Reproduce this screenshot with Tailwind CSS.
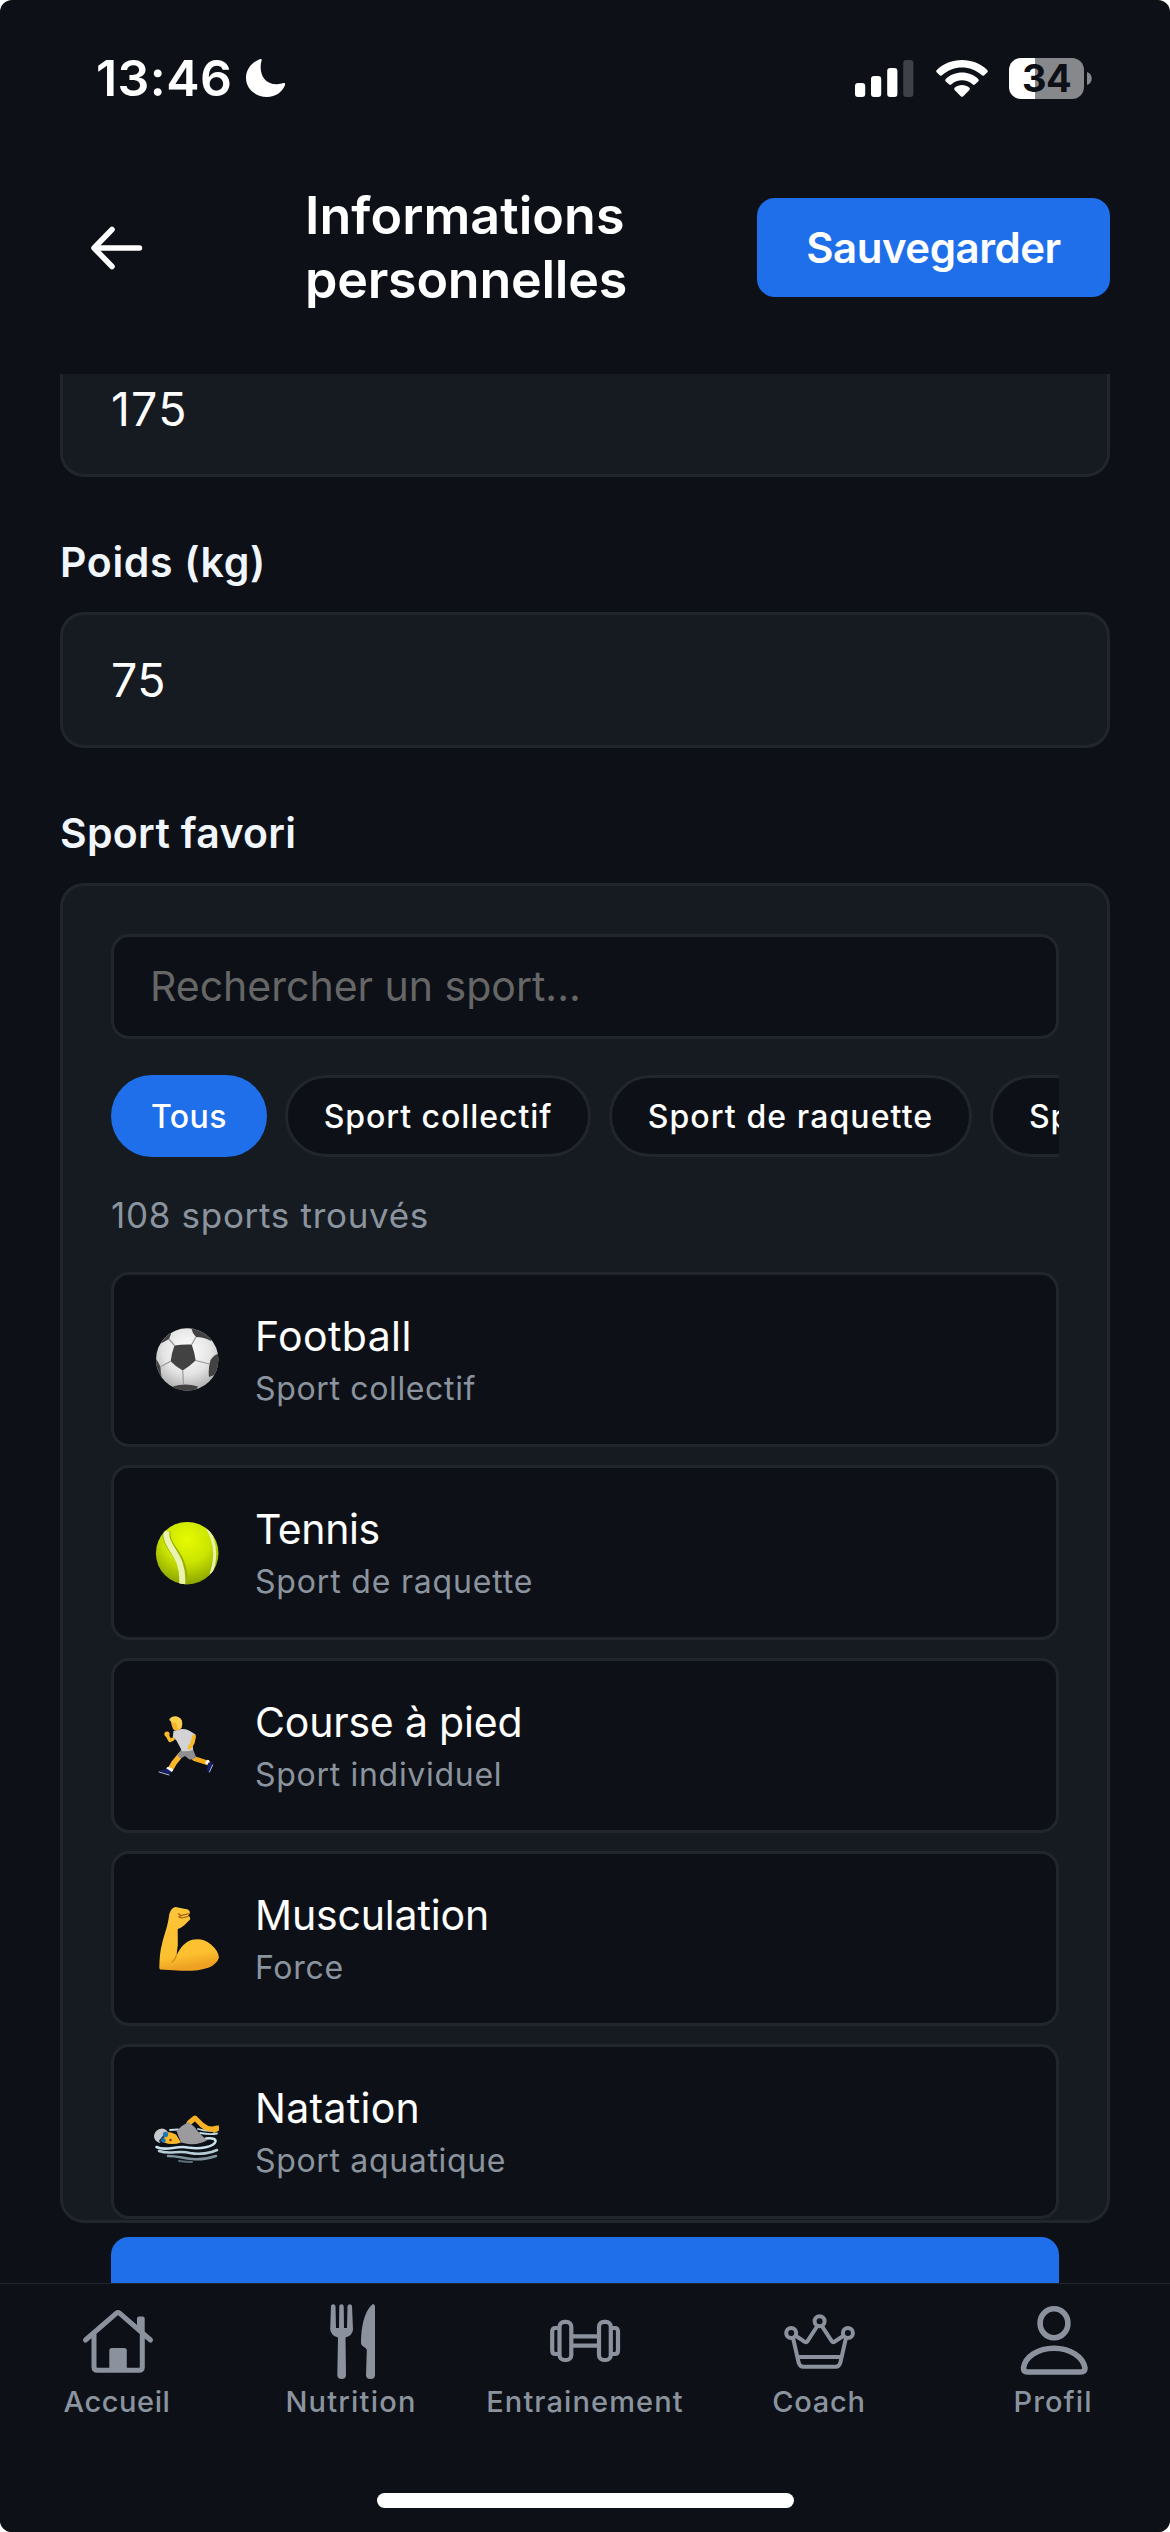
<!DOCTYPE html>
<html lang="fr">
<head>
<meta charset="utf-8">
<title>Informations personnelles</title>
<script src="https://cdn.jsdelivr.net/npm/@tailwindcss/browser@4"></script>
</head>
<body class="bg-white font-['Inter',sans-serif] text-white antialiased">
<div class="flex h-[2532px] w-[1170px] flex-col overflow-hidden rounded-[12px] bg-[#0d1117]">

  <!-- Status bar -->
  <div class="flex h-[156px] shrink-0 items-center justify-between pr-[78px] pl-[96px]">
    <div class="flex items-center">
      <span class="w-[150px] text-[50px] leading-[52px] font-semibold tracking-[0.45px]">13:46</span>
      <svg class="h-[40px] w-[40px]" viewBox="0 0 40 40" fill="#fff"><path d="M13.6 1.2C14.8.6 16 1 15.6 2.4C12.6 13 16.5 26.3 31 26.2C33.500 26.200 35.500 25.700 37.200 25.100C38.800 24.600 39.500 25.500 39 27C36.500 34 29.500 39 21 39C9.500 39 0 30.500 0 20C0 11.500 5.500 4.500 13.600 1.200Z"/></svg>
    </div>
    <div class="flex items-center">
      <svg class="mr-[22px] h-[41px] w-[59px]" viewBox="0 0 59 41" fill="#fff"><rect x="0" y="25" width="10.200" height="14" rx="3"/><rect x="16" y="18" width="10.200" height="21" rx="3"/><rect x="32.200" y="10" width="10.200" height="29" rx="3"/><rect x="48.200" y="2" width="10.200" height="37" rx="3" fill="#3e4147"/></svg>
      <svg class="mr-[21px] h-[41px] w-[52px]" viewBox="0 0 52 41" fill="#fff"><path d="M.6 12.200C14 -1.400 38 -1.400 51.400 12.200Q52.200 13.200 51.400 14.200L48 17.400Q47 18.200 46 17.300C34.500 6.900 17.500 6.900 6 17.300Q5 18.200 4 17.400L.6 14.200Q-.2 13.200 .6 12.200Z"/><path d="M9.600 21.200C18.500 12.300 33.500 12.300 42.400 21.200Q43.200 22.200 42.400 23.200L38.800 26.500Q37.800 27.300 36.800 26.400C30.500 20.900 21.500 20.900 15.200 26.400Q14.200 27.300 13.200 26.500L9.600 23.200Q8.800 22.200 9.600 21.200Z"/><path d="M18.600 29.800C22.900 26 29.100 26 33.400 29.800Q34.400 30.800 33.400 31.900L27 38.400Q26 39.200 25 38.400L18.600 31.900Q17.600 30.800 18.600 29.800Z"/></svg>
      <div class="flex h-[41px] w-[75px] items-center justify-center rounded-[12px] bg-linear-to-r from-white from-35% to-[#87888b] to-35%">
        <span class="text-[38px] leading-[41px] font-bold tracking-[-0.5px] text-[#0d1117]">34</span>
      </div>
      <svg class="ml-[3px] h-[13px] w-[5px]" viewBox="0 0 5 13" fill="#87888b"><path d="M0 0C6.300 2 6.300 11 0 13Z"/></svg>
    </div>
  </div>

  <!-- Header -->
  <header class="flex h-[183px] shrink-0 items-center pr-[60px] pl-[90px]">
    <svg class="h-[54px] w-[54px]" viewBox="0 0 54 54" fill="none" stroke="#fff" stroke-width="5.500" stroke-linecap="round" stroke-linejoin="round"><path d="M22 8.500L4 27L22 45.500M5 27H49.500"/></svg>
    <h1 class="ml-[161px] w-[452px] text-[52px] leading-[64px] font-semibold"><span class="tracking-[0.08px]">Informations</span><br><span class="tracking-[-0.25px]">personnelles</span></h1>
    <button class="h-[99px] w-[353px] rounded-[18px] bg-[#1f6feb] pb-[1px] text-[42px] leading-[51px] font-semibold tracking-[-0.46px]">Sauvegarder</button>
  </header>

  <!-- Scrolled form -->
  <main class="mt-[35px] flex h-[1909px] shrink-0 flex-col overflow-hidden px-[60px]">
    <div class="-mt-[33px] flex h-[136px] shrink-0 items-center rounded-[24px] border-[3px] border-[#21262d] bg-[#161b22] pt-[2px] pl-[48px] text-[46.5px] tracking-[1.2px]">175</div>

    <label class="mt-[60px] mb-[25px] text-[41px] leading-[50px] font-semibold tracking-[0.65px] text-[#f0f6fc]">Poids (kg)</label>
    <div class="flex h-[136px] shrink-0 items-center rounded-[24px] border-[3px] border-[#21262d] bg-[#161b22] pt-[2px] pl-[48px] text-[46.5px] tracking-[0.4px]">75</div>

    <label class="mt-[60px] mb-[25px] text-[41px] leading-[50px] font-semibold tracking-[0.3px] text-[#f0f6fc]">Sport favori</label>
    <section class="flex h-[1340px] shrink-0 flex-col rounded-[24px] border-[3px] border-[#21262d] bg-[#161b22] px-[48px] pt-[48px]">
      <div class="flex h-[105px] shrink-0 items-center rounded-[18px] border-[3px] border-[#21262d] bg-[#0d1117] pl-[36px] text-[41px] text-[#666666]">Rechercher un sport...</div>

      <div class="mt-[36px] flex h-[82px] shrink-0 gap-[18px] overflow-hidden text-[32px] font-medium whitespace-nowrap">
        <span class="flex w-[156px] shrink-0 items-center justify-center rounded-full bg-[#1f6feb] pt-[2px] tracking-[0.5px]">Tous</span>
        <span class="flex w-[306px] shrink-0 items-center justify-center rounded-full border-[3px] border-[#21262d] bg-[#0d1117] pt-[2px] tracking-[0.95px]">Sport collectif</span>
        <span class="flex w-[363px] shrink-0 items-center justify-center rounded-full border-[3px] border-[#21262d] bg-[#0d1117] pt-[2px] tracking-[1.1px]">Sport de raquette</span>
        <span class="flex w-[325px] shrink-0 items-center rounded-full border-[3px] border-[#21262d] bg-[#0d1117] pt-[2px] pl-[36px] tracking-[0.95px]">Sport individuel</span>
      </div>

      <p class="mt-[37px] mb-[36px] text-[35px] leading-[42px] tracking-[0.7px] text-[#8b949e]">108 sports trouvés</p>

      <ul class="flex flex-col gap-[18px]">
        <li class="flex h-[175px] shrink-0 items-center gap-[35px] rounded-[18px] border-[3px] border-[#21262d] bg-[#0d1117] pl-[40px]">
          <svg class="h-[66px] w-[66px] overflow-visible" viewBox="0 0 66 66">
            <defs>
              <radialGradient id="ball" cx=".5" cy=".35" r=".7"><stop offset="0" stop-color="#fff"/><stop offset=".55" stop-color="#e4e4e4"/><stop offset="1" stop-color="#a4a4a4"/></radialGradient>
              <clipPath id="ballClip"><circle cx="33.200" cy="32.500" r="31.200"/></clipPath>
            </defs>
            <circle cx="33.200" cy="32.500" r="31.200" fill="url(#ball)"/>
            <g clip-path="url(#ballClip)">
              <g fill="#424242"><path d="M20.500 18.500Q29 17 37.700 17.500Q40.500 25 41.700 33.500Q36 39 28.700 43.500Q22 40 16.700 34.200Q17.500 26 20.500 18.500Z"/><path d="M18 3L6 12L5.500 17Q10 15 15 12Q17 8 18 3Z"/><path d="M37 0Q38 6 42 10Q50 10 57 14L58 8Z"/><path d="M66 26Q61 27 56.500 33Q54 41 55 50L66 46Z"/><path d="M19 59.500Q31 55.500 44 59.500L40 66H22Z"/><path d="M0 29Q4 34 6.500 40Q6.500 46 8 52L0 48Z"/></g>
              <path d="M20.500 18.500L15 12M37.700 17.500L42 10M41.700 33.500L55.500 37M28.700 43.500L29.500 57M16.700 34.200L7 39.500" stroke="#9a9a9a" stroke-width="1.200" fill="none"/>
            </g>
          </svg>
          <div><p class="text-[41px] leading-[50px] tracking-[0.4px]">Football</p><p class="mt-[8px] text-[32px] leading-[40px] tracking-[0.65px] text-[#8b949e]">Sport collectif</p></div>
        </li>
        <li class="flex h-[175px] shrink-0 items-center gap-[35px] rounded-[18px] border-[3px] border-[#21262d] bg-[#0d1117] pl-[40px]">
          <svg class="h-[66px] w-[66px] overflow-visible" viewBox="0 0 66 66">
            <defs>
              <radialGradient id="tennis" cx=".5" cy=".28" r=".75"><stop offset="0" stop-color="#e6fb00"/><stop offset=".5" stop-color="#cbe400"/><stop offset="1" stop-color="#86a000"/></radialGradient>
              <clipPath id="tennisClip"><circle cx="33.200" cy="33.200" r="31.300"/></clipPath>
            </defs>
            <circle cx="33.200" cy="33.200" r="31.300" fill="url(#tennis)"/>
            <g clip-path="url(#tennisClip)" fill="none">
              <path d="M12.500 11C10 28 32 34 29.500 64" stroke="#9bb000" stroke-width="8"/>
              <path d="M12.500 11C10 28 31 34 28 65" stroke="#eaf3b0" stroke-width="6"/>
              <path d="M52 6C62 21 63 37 57 54" stroke="#eaf3b0" stroke-width="3"/>
            </g>
          </svg>
          <div><p class="text-[41px] leading-[50px] tracking-[-0.4px]">Tennis</p><p class="mt-[8px] text-[32px] leading-[40px] tracking-[0.82px] text-[#8b949e]">Sport de raquette</p></div>
        </li>
        <li class="flex h-[175px] shrink-0 items-center gap-[35px] rounded-[18px] border-[3px] border-[#21262d] bg-[#0d1117] pl-[40px]">
          <svg class="h-[66px] w-[66px] overflow-visible" viewBox="0 0 66 66" stroke-linecap="round" stroke-linejoin="round">
            <path d="M40 45.500L54 50" stroke="#f5ab1d" stroke-width="4.500"/>
            <path d="M26.500 42L20 50L16.500 56" stroke="#fbb829" stroke-width="5.500" fill="none"/>
            <path d="M27.500 36H39L42.200 44.500Q39 47 35.500 46.500L31 43L26.500 45.500L23.500 42.500Z" fill="#8f8f92"/>
            <path d="M19.500 18Q28 14.500 35 17.500L41.500 21.500L38.500 26.500L39 37Q33 39 28 38L22.500 27.500L18.800 24Z" fill="#d3d3d6"/>
            <path d="M19 26L16 27.500L13 22" stroke="#fbb829" stroke-width="3.500" fill="none"/><circle cx="13" cy="21" r="2.600" fill="#fbb829"/>
            <path d="M40 23.500L38.500 30L35.500 34.500" stroke="#fbb829" stroke-width="4" fill="none"/>
            <path d="M17 9Q18 15 20 17Q25 18.500 27.500 15V7H17Z" fill="#f8b12c"/>
            <path d="M15.200 7Q16 3.500 22 3.300Q28.500 4.500 28.300 11Q28 16.500 24 16L22 9.500Q18 10.500 15.200 7Z" fill="#fbd04f"/>
            <path d="M14 55.500L17.500 57" stroke="#fff" stroke-width="3"/><path d="M52.800 49.800L54 48.300" stroke="#fff" stroke-width="3"/>
            <path d="M5 57.500L13.500 56L17 58.500L15.500 61.500Z" fill="#14206e"/><path d="M5 59L15 62" stroke="#b9bfdc" stroke-width="1"/>
            <path d="M54 50L58 48.800L58.500 53L55 59.500L53 57Z" fill="#14206e"/><path d="M58.600 52L55.500 59" stroke="#b9bfdc" stroke-width="1"/>
          </svg>
          <div><p class="text-[41px] leading-[50px] tracking-[-0.2px]">Course à pied</p><p class="mt-[8px] text-[32px] leading-[40px] tracking-[0.7px] text-[#8b949e]">Sport individuel</p></div>
        </li>
        <li class="flex h-[175px] shrink-0 items-center gap-[35px] rounded-[18px] border-[3px] border-[#21262d] bg-[#0d1117] pl-[40px]">
          <svg class="h-[66px] w-[66px] overflow-visible" viewBox="0 0 66 66">
            <defs><linearGradient id="arm" x1="0" y1="0" x2=".15" y2="1"><stop offset="0" stop-color="#fdc53a"/><stop offset=".8" stop-color="#fcc02f"/><stop offset="1" stop-color="#eda022"/></linearGradient></defs>
            <path d="M5.300 62C5.500 53 6 45 8 38C10 29 14 20 15.300 8Q17 2 21.500 1L34 3.500Q36.500 5 35.800 7.500L34 10Q37 11 36 13.500L30 19.500Q27 22 23.700 23L23.800 39L22.500 49.500C26 42 31 36 38 33.800Q49 31.500 57 38.500Q64.500 45 65 51.500Q63 58 55 61.500C43 66 27 65 15 64L6 63.500Z" fill="url(#arm)"/>
            <path d="M22.500 49.500Q21.500 53 18 56.500" stroke="#d98a1a" stroke-width="1.500" fill="none"/>
            <path d="M35.500 7.500L27 9.500L24 7.500M24.500 11L27.500 9.800M34 10.500L28 12L24.500 11" stroke="#a85a10" stroke-width="1.200" fill="none"/>
          </svg>
          <div><p class="text-[41px] leading-[50px] tracking-[-0.15px]">Musculation</p><p class="mt-[8px] text-[32px] leading-[40px] tracking-[0.7px] text-[#8b949e]">Force</p></div>
        </li>
        <li class="flex h-[175px] shrink-0 items-center gap-[35px] rounded-[18px] border-[3px] border-[#21262d] bg-[#0d1117] pl-[40px]">
          <svg class="h-[66px] w-[66px] overflow-visible" viewBox="0 0 66 66" stroke-linecap="round">
            <g fill="none" stroke="#c3dbe4" stroke-width="1.800"><path d="M44 30Q54 33 64 31"/><path d="M46 34Q56 36 63 34.500"/><path d="M16 31L24 30.500"/></g>
            <g fill="none" stroke="#c9e2ec" stroke-width="2.600"><path d="M2.500 48C12 53 22 46 34 48.500C46 50.500 60 48 61.500 42.500C62 39 55 39 52 39.500"/><path d="M5 52C16 56 24 51 36 54C46 56 57 54 63 51" stroke="#b3ccd6"/><path d="M14 57C24 57 28 59 38 60C47 61 56 59 62 57" stroke="#7d929b"/><path d="M25 62Q32 63 38 63" stroke="#5c6c74" stroke-width="2"/></g>
            <path d="M35 24L41 19L48 26Q55 32 62.500 29" stroke="#f9b224" stroke-width="5" stroke-linejoin="round" fill="none"/><path d="M56 31L65 26L64 32L60 34Z" fill="#f9b224"/>
            <path d="M8 33Q16 32 22 35.500L27 43.500Q18 46.500 10 43.500Z" fill="#fbb829"/>
            <path d="M22.500 32Q28 26 34.500 23L40.500 28Q47 37 53.500 41Q46 46 34 45L27 43.500Z" fill="#9b9b9e"/>
            <path d="M0 37Q1 30 8 29.500Q13 30 14 34L5.500 44Q0 42 0 37Z" fill="#c9c9cc"/>
            <path d="M6 42L11 36" stroke="#173a5e" stroke-width="2"/><circle cx="11.500" cy="35.500" r="2.700" fill="#2077b4"/><circle cx="9.500" cy="41.500" r="2.300" fill="#2077b4"/><circle cx="16.500" cy="41" r="1.200" fill="#7a2f08"/>
          </svg>
          <div><p class="text-[41px] leading-[50px] tracking-[0.3px]">Natation</p><p class="mt-[8px] text-[32px] leading-[40px] tracking-[0.66px] text-[#8b949e]">Sport aquatique</p></div>
        </li>
      </ul>
    </section>
    <div class="mx-[51px] mt-[14px] h-[99px] shrink-0 rounded-[18px] bg-[#1f6feb]"></div>
  </main>

  <!-- Tab bar -->
  <nav class="flex h-[249px] shrink-0 flex-col items-center border-t border-[#21262d] bg-[#0d1117] pt-[17px] text-[29px] leading-[36px] font-medium text-[#8b949e]">
    <div class="grid w-full grid-cols-5">
      <div class="flex flex-col items-center gap-[5px]">
        <svg class="h-[78px] w-[78px]" viewBox="78 2301 78 78" fill="none" stroke="#8b929e" stroke-width="5" stroke-linecap="round" stroke-linejoin="round"><path d="M85.500 2340L116.500 2313.200Q118 2312 119.500 2313.200L150.500 2340M94 2334V2367Q94 2370.300 97.500 2370.300H139Q142.300 2370.300 142.300 2367V2334"/><path d="M137 2328V2318.500Q137 2316.500 139 2316.500H142.500Q144.700 2316.500 144.700 2318.500V2335Z" fill="#8b929e" stroke="none"/><rect x="109.300" y="2348" width="17.500" height="23" rx="2.500" fill="#8b929e" stroke="none"/></svg>
        <span class="tracking-[0.57px]">Accueil</span>
      </div>
      <div class="flex flex-col items-center gap-[5px]">
        <svg class="h-[78px] w-[78px]" viewBox="312 2301 78 78" fill="#8b929e"><path d="M331 2306Q331.200 2304.300 333.200 2304.300T335.500 2306L336 2328H339L339.300 2306Q339.500 2304.300 341.500 2304.300T343.700 2306L344 2328H347L347.500 2306Q348 2304.300 349.800 2304.300T352 2306L353 2329.500Q352.500 2335.500 345.500 2337.500L346 2375.500Q345.500 2379 341.700 2379T337.300 2375.500L338 2337.500Q331 2335.500 330.200 2329.500Z"/><path d="M372.500 2304.300Q375 2303.800 375 2306.500V2375.500Q374.500 2379 370.500 2379T366 2375.500L366.800 2350Q366.500 2348.500 364.500 2347.300Q361 2345.500 361 2342.500C361 2329 363.500 2312 372.500 2304.300Z"/></svg>
        <span class="tracking-[1.2px]">Nutrition</span>
      </div>
      <div class="flex flex-col items-center gap-[5px]">
        <svg class="h-[78px] w-[78px]" viewBox="547 2301 78 78" fill="none" stroke="#8b929e" stroke-width="4.200"><rect x="560.500" y="2321.800" width="11.800" height="38.200" rx="5"/><rect x="600" y="2321.800" width="11.800" height="38.200" rx="5"/><path d="M560 2328H556.500Q553.200 2328 553.200 2331.500V2350.500Q553.200 2354 556.500 2354H560M612.500 2328H615.800Q619 2328 619 2331.500V2350.500Q619 2354 615.800 2354H612.500M572 2336.400H600M572 2345.600H600"/></svg>
        <span class="tracking-[1.1px]">Entrainement</span>
      </div>
      <div class="flex flex-col items-center gap-[5px]">
        <svg class="h-[78px] w-[78px]" viewBox="780 2301 78 78" fill="none" stroke="#8b929e" stroke-width="4" stroke-linejoin="round" stroke-linecap="round"><circle cx="791.200" cy="2333" r="5"/><circle cx="819.600" cy="2321.200" r="5"/><circle cx="847.900" cy="2333" r="5"/><path d="M796 2336L804.800 2341.800Q806.300 2342.700 807.500 2341.200L817 2326.500M822.200 2326.500L831.700 2341.200Q833 2342.700 834.400 2341.800L843.200 2336M793.500 2340L798.500 2362Q799.600 2366.800 803.500 2366.800H835.500Q839.400 2366.800 840.500 2362L845.500 2340M798.500 2357H840.500"/></svg>
        <span class="tracking-[0.8px]">Coach</span>
      </div>
      <div class="flex flex-col items-center gap-[5px]">
        <svg class="h-[78px] w-[78px]" viewBox="1014 2301 78 78" fill="none" stroke="#8b929e" stroke-width="5.600" stroke-linejoin="round"><ellipse cx="1054" cy="2323.300" rx="13.900" ry="14.500"/><path d="M1027.500 2372H1080.500Q1085 2372 1085 2368C1083 2356.500 1070 2348.200 1054 2348.200S1025 2356.500 1023.500 2368Q1023.500 2372 1027.500 2372Z"/></svg>
        <span class="tracking-[1.1px]">Profil</span>
      </div>
    </div>
    <div class="mt-[73px] h-[15px] w-[417px] rounded-full bg-white"></div>
  </nav>
</div>
</body>
</html>
